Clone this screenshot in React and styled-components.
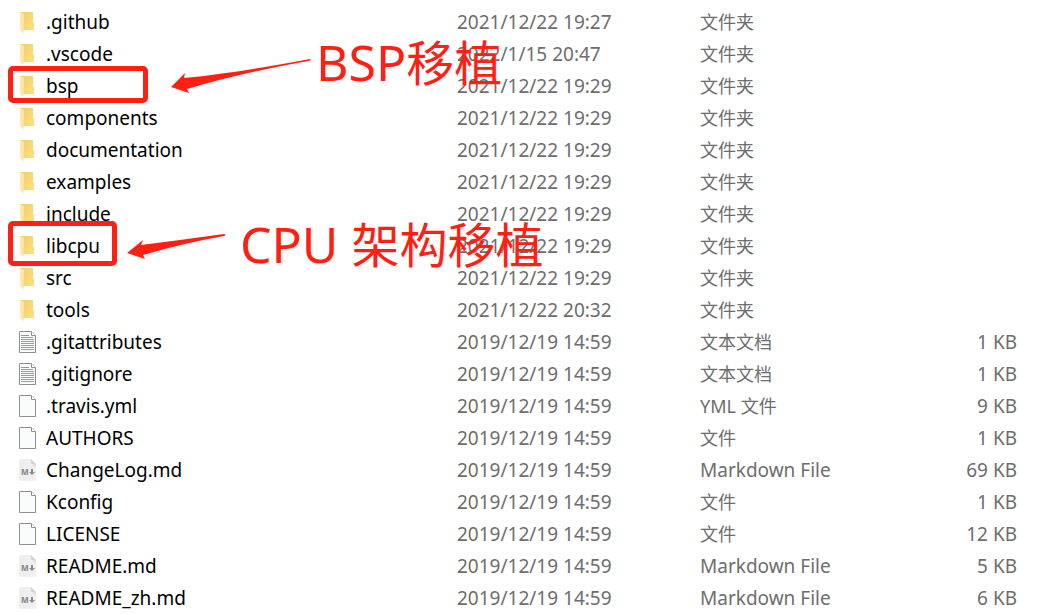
import React from 'react';
import styled, { createGlobalStyle } from 'styled-components';

const GlobalStyle = createGlobalStyle`
    * {
        box-sizing: border-box;
    }
    body {
        margin: 0;
        background-color: #fff;
        font-family: 'Noto Sans', 'Noto Sans CJK SC', sans-serif;
    }
`

const FileView = styled.main`
    position: relative;
    width: 100%;
    min-width: 800px;
    padding-top: 6px;
    overflow: hidden;
`

const FileTable = styled.table`
    width: 100%;
    table-layout: fixed;
    border-collapse: collapse;
    font-size: 19px;
    line-height: 32px;
    white-space: nowrap;
`

const Column = styled.col`
    width: ${props => props.$width};
`

const Row = styled.tr`
    height: 32px;
`

const NameCell = styled.th`
    padding: 0 0 0 19px;
    font-weight: 400;
    text-align: left;
    color: #000;
`

const FileName = styled.span`
    display: flex;
    align-items: center;
    gap: 10px;
    height: 32px;
    svg {
        display: block;
        flex: none;
    }
`

const InfoCell = styled.td`
    height: 32px;
    padding: 0 ${props => props.$end ? '21px' : '0'} 0 0;
    color: #6d6d6d;
    font-size: ${props => props.$chinese ? '18px' : '19px'};
    text-align: ${props => props.$end ? 'right' : 'left'};
`

const Annotation = styled.div`
    position: absolute;
    left: 8px;
    top: ${props => props.$top}px;
    display: flex;
    align-items: flex-start;
    color: #ff2013;
    pointer-events: none;
    svg {
        display: block;
        flex: none;
        fill: currentColor;
    }
`

const Highlight = styled.span`
    flex: none;
    width: ${props => props.$width}px;
    height: ${props => props.$height}px;
    margin-top: ${props => props.$drop}px;
    border: 5px solid currentColor;
    border-radius: 5px;
`

const Note = styled.p`
    margin: 0;
    font-size: 48px;
    line-height: 64px;
    white-space: nowrap;
`

const NoteLatin = styled.span`
    font-size: 50px;
`

const FolderIcon = () => (
    <svg width="17" height="22" viewBox="0 0 17 22" aria-hidden="true">
        <defs>
            <linearGradient id="folder-back" x1="0" y1="0" x2="1" y2="1">
                <stop offset="0" stopColor="#f3cd66" />
                <stop offset="1" stopColor="#fbdf88" />
            </linearGradient>
            <linearGradient id="folder-front" x1="0" y1="0" x2="1" y2="0">
                <stop offset="0" stopColor="#ffebad" />
                <stop offset="1" stopColor="#fde39a" />
            </linearGradient>
        </defs>
        <path d="M1 1H14V11L15 12V19H5L1 18Z" fill="url(#folder-back)" />
        <path d="M1 1L5 3V13L4.5 14V22L1 19.5Z" fill="url(#folder-front)" />
    </svg>
)

const PageIcon = ({ lines }) => (
    <svg width="17" height="22" viewBox="0 0 17 22" aria-hidden="true">
        <path d="M.5 .5H12.5L16.5 4.5V21.5H.5Z" fill="#fafbfb" stroke="#8f8f8f" />
        <path d="M12.5 .5V4.5H16.5" fill="#fff" stroke="#8f8f8f" />
        {lines ? <path d="M2 4.5H10M2 6.5H14M2 8.5H15M2 10.5H15M2 12.5H15M2 14.5H15M2 16.5H15M2 18.5H15" stroke="#9b9b9b" /> : null}
    </svg>
)

const MarkdownIcon = () => (
    <svg width="17" height="22" viewBox="0 0 17 22" aria-hidden="true">
        <path d="M1 0H12L17 5V21Q17 22 16 22H1Q0 22 0 21V1Q0 0 1 0Z" fill="#efefef" />
        <path d="M12 0L17 5H13Q12 5 12 4Z" fill="#d2d2d2" />
        <path d="M13 5H17V9Z" fill="#e0e0e0" />
        <text x="2" y="16" fontFamily="Noto Sans" fontSize="8" fontWeight="800" fill="#8a8a8a">M</text>
        <path d="M12 10H14V13H16L13 16L10 13H12Z" fill="#8a8a8a" />
    </svg>
)

const icons = {
    folder: <FolderIcon />,
    text: <PageIcon lines />,
    page: <PageIcon />,
    markdown: <MarkdownIcon />,
}

const files = [
    { name: '.github', date: '2021/12/22 19:27', type: '文件夹', icon: 'folder' },
    { name: '.vscode', date: '2022/1/15 20:47', type: '文件夹', icon: 'folder' },
    { name: 'bsp', date: '2021/12/22 19:29', type: '文件夹', icon: 'folder' },
    { name: 'components', date: '2021/12/22 19:29', type: '文件夹', icon: 'folder' },
    { name: 'documentation', date: '2021/12/22 19:29', type: '文件夹', icon: 'folder' },
    { name: 'examples', date: '2021/12/22 19:29', type: '文件夹', icon: 'folder' },
    { name: 'include', date: '2021/12/22 19:29', type: '文件夹', icon: 'folder' },
    { name: 'libcpu', date: '2021/12/22 19:29', type: '文件夹', icon: 'folder' },
    { name: 'src', date: '2021/12/22 19:29', type: '文件夹', icon: 'folder' },
    { name: 'tools', date: '2021/12/22 20:32', type: '文件夹', icon: 'folder' },
    { name: '.gitattributes', date: '2019/12/19 14:59', type: '文本文档', size: '1 KB', icon: 'text' },
    { name: '.gitignore', date: '2019/12/19 14:59', type: '文本文档', size: '1 KB', icon: 'text' },
    { name: '.travis.yml', date: '2019/12/19 14:59', type: 'YML 文件', size: '9 KB', icon: 'page' },
    { name: 'AUTHORS', date: '2019/12/19 14:59', type: '文件', size: '1 KB', icon: 'page' },
    { name: 'ChangeLog.md', date: '2019/12/19 14:59', type: 'Markdown File', size: '69 KB', icon: 'markdown' },
    { name: 'Kconfig', date: '2019/12/19 14:59', type: '文件', size: '1 KB', icon: 'page' },
    { name: 'LICENSE', date: '2019/12/19 14:59', type: '文件', size: '12 KB', icon: 'page' },
    { name: 'README.md', date: '2019/12/19 14:59', type: 'Markdown File', size: '5 KB', icon: 'markdown' },
    { name: 'README_zh.md', date: '2019/12/19 14:59', type: 'Markdown File', size: '6 KB', icon: 'markdown' },
]

const FileRow = ({ name, date, type, size, icon }) => (
    <Row>
        <NameCell scope="row">
            <FileName>{icons[icon]}{name}</FileName>
        </NameCell>
        <InfoCell>{date}</InfoCell>
        <InfoCell $chinese={icon !== 'markdown'}>{type}</InfoCell>
        <InfoCell $end>{size}</InfoCell>
    </Row>
)

const App = () => (
    <>
        <GlobalStyle />
        <FileView lang="zh-CN">
            <FileTable>
                <colgroup>
                    <Column $width="auto" />
                    <Column $width="243px" />
                    <Column $width="218px" />
                    <Column $width="120px" />
                </colgroup>
                <tbody>
                    {files.map(file => <FileRow key={file.name} {...file} />)}
                </tbody>
            </FileTable>

            {/* red notes drawn over the list */}
            <Annotation $top={30}>
                <Highlight $drop={36} $width={140} $height={37} />
                <svg width="168" height="64" viewBox="-22 -26 168 64" aria-hidden="true">
                    <path d="M1 31L15 17L14 22Q60 18 140 3Q142 4 138 5Q70 17 17 33L19 37Z" />
                </svg>
                <Note><NoteLatin>BSP</NoteLatin>移植</Note>
            </Annotation>

            <Annotation $top={212}>
                <Highlight $drop={9} $width={109} $height={45} />
                <svg width="123" height="64" viewBox="-9 -20 123 64" aria-hidden="true">
                    <path d="M1 21L17 8L15 13Q55 8 98 2Q101 3 98 4Q58 11 17 23L19 27Z" />
                </svg>
                <Note><NoteLatin>CPU </NoteLatin>架构移植</Note>
            </Annotation>
        </FileView>
    </>
)

export default App;
